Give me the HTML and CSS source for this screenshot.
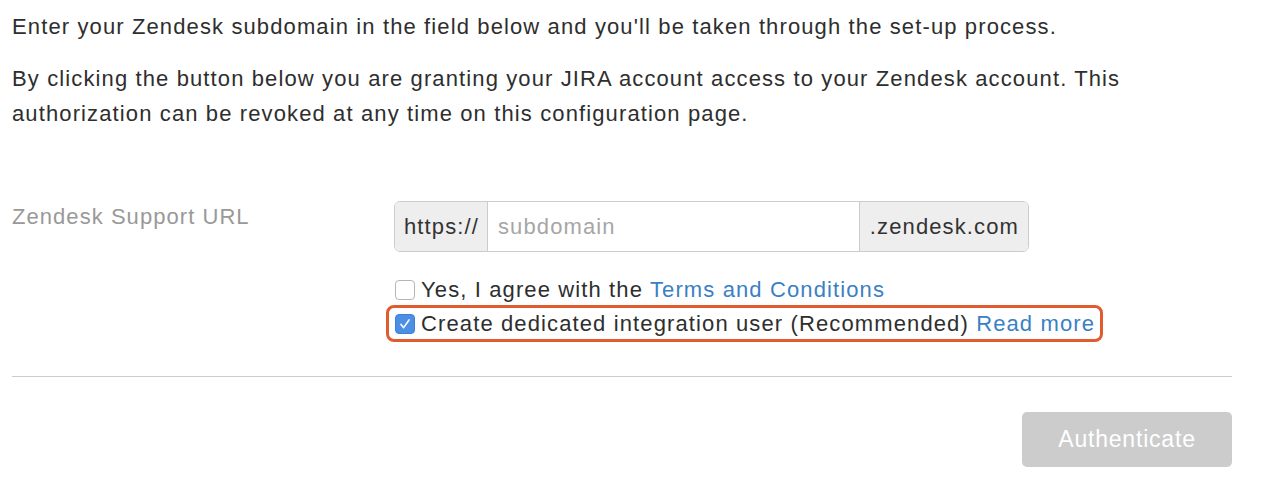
FILE: index.html
```html
<!DOCTYPE html>
<html>
<head>
<meta charset="utf-8">
<link rel="stylesheet" href="styles.css">
</head>
<body>
<div class="page">
  <p class="intro">Enter your Zendesk subdomain in the field below and you'll be taken through the set-up process.</p>
  <p class="intro">By clicking the button below you are granting your JIRA account access to your Zendesk account. This authorization can be revoked at any time on this configuration page.</p>

  <div class="form-row">
    <label class="field-label">Zendesk Support URL</label>
    <div class="field">
      <div class="input-group">
        <span class="addon addon-left">https://</span>
        <span class="input">subdomain</span>
        <span class="addon addon-right">.zendesk.com</span>
      </div>
      <div class="checks">
        <div class="check-row">
          <span class="box"></span>
          <span>Yes, I agree with the <a class="link">Terms and Conditions</a></span>
        </div>
        <div class="check-row highlight">
          <span class="box checked"><svg width="20" height="20" viewBox="0 0 20 20"><path d="M5.5 10.5 L8.5 14 L14.5 5.5" fill="none" stroke="#fff" stroke-width="1.8" stroke-linecap="round" stroke-linejoin="round"/></svg></span>
          <span>Create dedicated integration user (Recommended) <a class="link">Read more</a></span>
        </div>
      </div>
    </div>
  </div>

  <div class="divider"></div>
  <div class="actions">
    <button class="btn">Authenticate</button>
  </div>
</div>
</body>
</html>
```

FILE: styles.css
```css
html, body {
  margin: 0;
  padding: 0;
  background: #fff;
}
body {
  font-family: "Liberation Sans", Arial, sans-serif;
  font-size: 22px;
  letter-spacing: 1.12px;
  color: #2e2e2e;
}
.page {
  width: 1220px;
  padding-left: 12px;
  padding-top: 9px;
}
.intro {
  margin: 0 0 17px 0;
  line-height: 35px;
}
.form-row {
  display: grid;
  grid-template-columns: 382px 1fr;
  margin-top: 69px;
}
.field-label {
  color: #999;
  line-height: 34px;
  margin-top: 0;
  letter-spacing: 1.05px;
}
.field {
  display: flex;
  flex-direction: column;
  align-items: flex-start;
  margin-top: 1px;
}
.input-group {
  display: flex;
  height: 51px;
  width: 635px;
  box-sizing: border-box;
  border: 1px solid #ccc;
  border-radius: 6px;
  overflow: hidden;
}
.addon {
  background: #eee;
  display: flex;
  align-items: center;
  padding: 0 8px 0 9px;
  color: #333;
}
.addon-left {
  border-right: 1px solid #ccc;
}
.addon-right {
  border-left: 1px solid #ccc;
  padding: 0 9px 0 10px;
}
.input {
  flex: 1;
  display: flex;
  align-items: center;
  padding: 0 10px;
  color: #a6a6a6;
  background: #fff;
}
.checks {
  margin-top: 20px;
  display: flex;
  flex-direction: column;
  align-items: flex-start;
}
.check-row {
  display: flex;
  align-items: center;
  gap: 6px;
  line-height: 35px;
  padding-left: 1px;
}
.highlight {
  border: 3px solid #e05c2f;
  border-radius: 8px;
  line-height: 31px;
  margin-left: -8px;
  margin-top: -2px;
  padding: 0 5px 0 6px;
}
.box {
  width: 20px;
  height: 20px;
  box-sizing: border-box;
  border: 1px solid #b5b5b5;
  border-radius: 4px;
  background: #fff;
  display: inline-block;
  flex: none;
}
.box.checked {
  background: #4b8fe6;
  border-color: #3f80d6;
  display: flex;
  align-items: center;
  justify-content: center;
}
.box.checked svg {
  width: 18px;
  height: 18px;
}
.link {
  color: #3b7fc4;
  text-decoration: none;
}
.divider {
  margin-top: 34px;
  border-top: 1px solid #ccc;
  height: 0;
}
.actions {
  display: flex;
  justify-content: flex-end;
  margin-top: 35px;
}
.btn {
  width: 210px;
  height: 55px;
  background: #ccc;
  color: #fff;
  border: none;
  border-radius: 5px;
  font-family: "Liberation Sans", Arial, sans-serif;
  font-size: 23px;
  letter-spacing: 0.8px;
}
```
